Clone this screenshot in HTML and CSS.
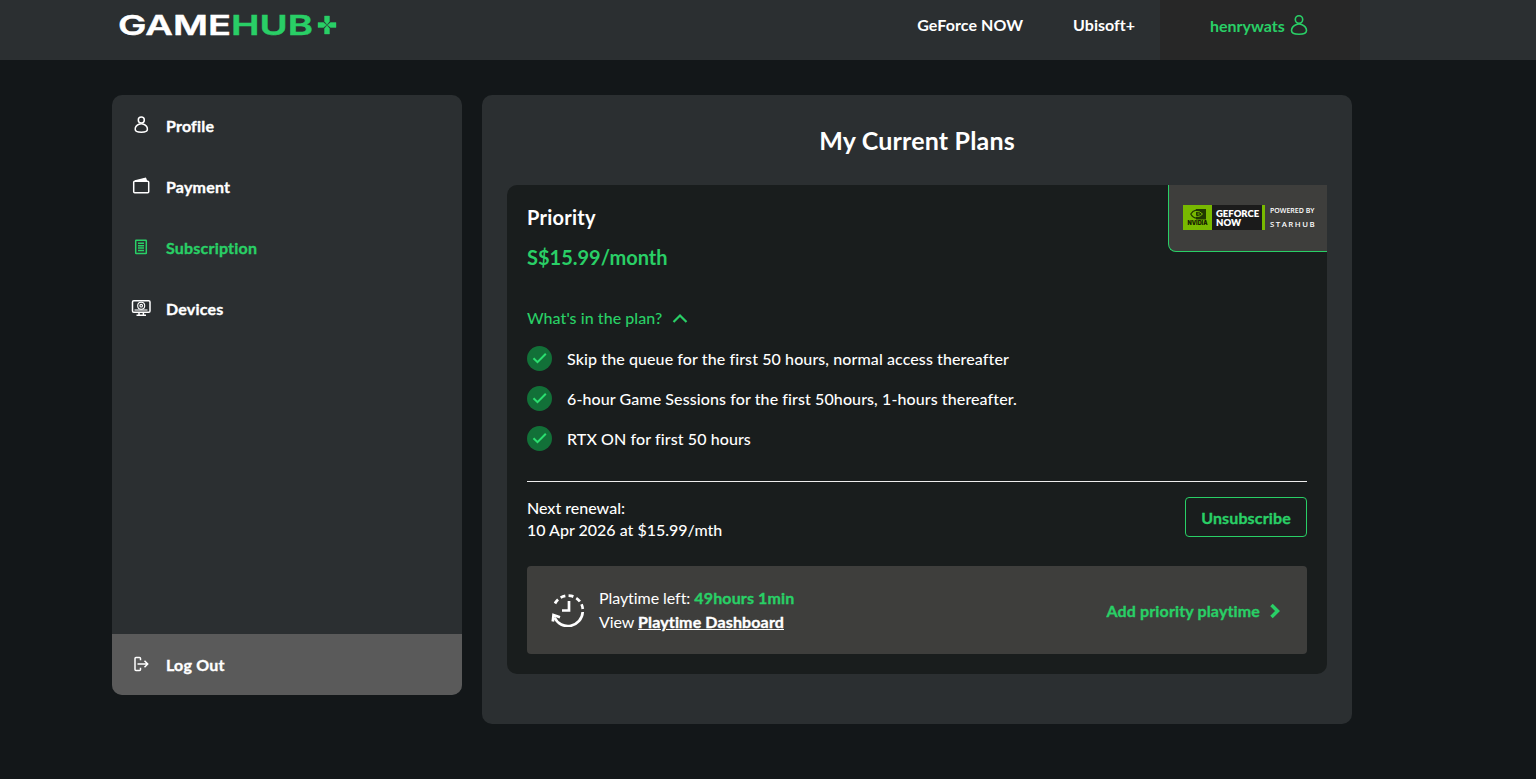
FILE: index.html
```html
<!DOCTYPE html>
<html lang="en">
<head>
<meta charset="utf-8">
<title>GameHub+ | My Current Plans</title>
<link rel="stylesheet" href="styles.css">
</head>
<body>
<header class="topbar">
  <svg class="logo" width="220" height="26" viewBox="0 0 220 26" role="img" aria-label="GameHub+">
    <text class="logo-text" x="-1" y="22" textLength="113" lengthAdjust="spacingAndGlyphs">GAME</text>
    <text class="logo-text logo-hub" x="112" y="22" textLength="82" lengthAdjust="spacingAndGlyphs">HUB</text>
    <path class="logo-plus" d="M205.500 3h5v5.500l-2.500 3-2.500-3zM205.500 21h5v-5.500l-2.500-3-2.500 3zM199 9.500h5.500l3 2.500-3 2.500H199zM217 9.500h-5.500l-3 2.500 3 2.500h5.500z"/>
  </svg>
  <nav class="topnav">
    <a class="nav-gfn">GeForce NOW</a>
    <a class="nav-ubi">Ubisoft+</a>
    <a class="user"><span>henrywats</span>
      <svg width="18" height="22" viewBox="0 0 18 22"><circle cx="9" cy="5.500" r="3.700"/><path d="M6.500 10.500C3 12 1.500 14.500 1.500 16.500c0 3 3.300 3.700 7.500 3.700s7.500-.7 7.500-3.700c0-2-1.500-4.500-5-6q-2.500-1.200-5 0z"/></svg>
    </a>
  </nav>
</header>
<div class="layout">
  <aside class="sidebar">
    <a class="item"><svg class="icon" width="20" height="20" viewBox="0 0 20 20"><circle cx="10.300" cy="5" r="3"/><path d="M8 9.300c-2.700 1-3.800 3-3.800 4.900 0 2.300 2.500 3 6.100 3s6.100-.7 6.100-3c0-1.900-1.100-3.900-3.800-4.900q-2.300-.9-4.600 0z"/></svg><span>Profile</span></a>
    <a class="item"><svg class="icon" width="20" height="20" viewBox="0 0 20 20"><rect x="2.700" y="5.300" width="15" height="11.400" rx="1"/><path class="solid" d="M4 5 14.500 2.300 15.500 5z"/></svg><span>Payment</span></a>
    <a class="item active"><svg class="icon" width="20" height="20" viewBox="0 0 20 20"><rect x="4.700" y="3.200" width="10.600" height="13.300" rx=".5"/><path d="M7 6.300h6M7 8.700h6M7 11.100h6M7 13.500h6"/></svg><span>Subscription</span></a>
    <a class="item"><svg class="icon" width="20" height="20" viewBox="0 0 20 20"><rect x="1.500" y="2.700" width="17.500" height="11.600" rx="1.300"/><g class="fine"><circle cx="10.200" cy="7.700" r="3.500"/><circle cx="10.200" cy="7.700" r="1.300"/><path d="M3.500 12h13"/></g><path d="M8 14.500v2.300M12.400 14.500v2.300M5.500 17.300h9.500"/></svg><span>Devices</span></a>
    <a class="item logout"><svg class="icon" width="20" height="20" viewBox="0 0 20 20"><path d="M9.500 6.200V4.500q0-1-1-1h-3.500q-1 0-1 1v11q0 1 1 1h3.500q1 0 1-1v-1.700M6.500 10H16.500M13.500 6.800l3.200 3.200-3.200 3.200"/></svg><span>Log Out</span></a>
  </aside>
  <main class="panel">
    <h1>My Current Plans</h1>
    <section class="plan">
      <div class="provider">
        <div class="nvidia"><svg width="16" height="11" viewBox="0 0 16 11"><path class="eye-block" d="M6 0h10v10.500H6z"/><path class="eye" d="M6 1.200Q2.500 2 .8 5q2 4 6 4.200"/><path class="iris" d="M6 2.500Q4 3.200 3.200 5 4.500 7.500 7.500 7.500q3 0 5-2.500Q10 2 6 2.500zM7.500 5h2"/></svg><b>NVIDIA</b></div>
        <div class="gfn">GEFORCE<br>NOW</div>
        <div class="powered"><span>POWERED BY</span><span class="starhub">STARHUB</span></div>
      </div>
      <h2>Priority</h2>
      <p class="price">S$15.99/month</p>
      <div class="toggle"><span>What's in the plan?</span><svg width="16" height="10" viewBox="0 0 16 10"><path d="M1.500 9 8 2.500 14.500 9"/></svg></div>
      <ul class="features">
        <li><svg width="25" height="25" viewBox="0 0 25 25"><circle cx="12.500" cy="12.500" r="12.500"/><path d="m6.500 12.200 4 4 8.300-8.500"/></svg><span>Skip the queue for the first 50 hours, normal access thereafter</span></li>
        <li><svg width="25" height="25" viewBox="0 0 25 25"><circle cx="12.500" cy="12.500" r="12.500"/><path d="m6.500 12.200 4 4 8.300-8.500"/></svg><span>6-hour Game Sessions for the first 50hours, 1-hours thereafter.</span></li>
        <li><svg width="25" height="25" viewBox="0 0 25 25"><circle cx="12.500" cy="12.500" r="12.500"/><path d="m6.500 12.200 4 4 8.300-8.500"/></svg><span>RTX ON for first 50 hours</span></li>
      </ul>
      <div class="renewal">
        <p>Next renewal:<br>10 Apr 2026 at $15.99/mth</p>
        <button class="unsubscribe">Unsubscribe</button>
      </div>
      <div class="playtime">
        <svg class="clock" width="34" height="34" viewBox="0 0 34 34"><path d="M3.500 24.500A14.800 14.800 0 0 0 31.700 19"/><path d="M4 10.500A14.800 14.800 0 0 1 31.800 16" stroke-dasharray="5 3.200"/><path d="M18 8v9.500h-7M1.800 28.500l.7-6.500 6.500 2.300"/></svg>
        <p>Playtime left: <b class="left">49hours 1min</b><br>View <a class="dash">Playtime Dashboard</a></p>
        <a class="add"><span>Add priority playtime</span><svg width="10" height="16" viewBox="0 0 10 16"><path d="m1.500 2 6 6-6 6"/></svg></a>
      </div>
    </section>
  </main>
</div>
</body>
</html>
```
FILE: styles.css
```css
* { box-sizing: border-box; }
body { margin: 0; min-height: 779px; background: #131719; color: #fff; font: 500 16px/24px Lato, sans-serif; font-variant-ligatures: none; overflow: hidden; }
h1, h2, p, ul { margin: 0; padding: 0; }
svg { flex: none; fill: none; }
.topbar { height: 60px; background: #2b2f31; display: flex; justify-content: space-between; align-items: flex-start; padding: 0 176px 0 119px; }
.logo { margin-top: 13px; overflow: visible; }
.logo-text { font: 600 27.500px Inter, sans-serif; fill: #fff; stroke: #fff; stroke-width: .4; }
.logo .logo-hub, .logo-plus { fill: #29cf66; stroke: #29cf66; stroke-width: .4; }
.topnav { display: flex; height: 60px; font-weight: 700; }
.nav-gfn { padding-top: 13px; margin-right: 50px; letter-spacing: .08px; }
.nav-ubi { padding-top: 13px; margin-right: 25px; }
.user { width: 200px; background: #272727; color: #29cf66; display: flex; padding: 14px 0 0 50px; gap: 5px; }
.user svg { stroke: #29cf66; stroke-width: 1.600; }
.layout { display: flex; align-items: flex-start; gap: 20px; padding: 35px 0 0 112px; }
.sidebar { width: 350px; height: 600px; background: #2b2f31; border-radius: 10px; display: flex; flex-direction: column; overflow: hidden; }
.item { display: flex; align-items: center; gap: 15px; height: 61px; padding: 0 0 0 19px; }
.item span, .unsubscribe, .left, .dash, .add span { font-weight: 700; letter-spacing: .14px; -webkit-text-stroke: .35px currentColor; }
.item span { letter-spacing: .2px; }
.icon { stroke: #fff; stroke-width: 1.500; margin-top: -2px; }
.fine { stroke-width: 1.100; }
.solid { fill: #fff; }
.active { color: #29cf66; }
.active .icon { stroke: #29cf66; }
.logout { margin-top: auto; background: #5a5a5a; }
.panel { width: 870px; height: 629px; background: #2b2f31; border-radius: 10px; padding: 29px 25px; }
h1 { font-size: 25px; line-height: 32px; text-align: center; font-weight: 700; margin-bottom: 29px; letter-spacing: .18px; }
.plan { position: relative; height: 489px; background: #191d1d; border-radius: 10px 0 10px 10px; padding: 20px; overflow: hidden; }
.provider { position: absolute; top: 0; right: 0; width: 159px; height: 67px; background: #3e3e3c; border: solid #29cf66; border-width: 0 0 1px 1px; border-radius: 0 0 0 8px; display: flex; align-items: center; padding-left: 14px; }
.nvidia { width: 29px; height: 25px; background: #78b900; display: flex; flex-direction: column; align-items: center; justify-content: center; color: #162000; font: 800 5.500px/7px Inter, sans-serif; margin-top: -1px; }
.eye-block { fill: #203800; }
.eye { stroke: #203800; stroke-width: 1.200; }
.iris { stroke: #78b900; stroke-width: 1; }
.gfn { width: 53px; height: 25px; padding: 4px 0 0 4px; background: #1b1b1b; border-right: 3px solid #78b900; font: 800 9.500px/9px Lato, sans-serif; margin-top: -1px; }
.powered { display: flex; flex-direction: column; margin-left: 5px; font: 600 7px/10px "Open Sans", sans-serif; gap: 3px; margin-top: -2px; }
.starhub { letter-spacing: 1.500px; font-size: 7.800px; }
h2 { font-size: 20px; line-height: 24px; font-weight: 700; letter-spacing: .25px; }
.price { margin-top: 16px; font-size: 20px; font-weight: 700; color: #29cf66; }
.toggle { margin-top: 37px; display: flex; align-items: center; gap: 10px; color: #29cf66; letter-spacing: .06px; }
.toggle svg, .add svg { stroke: #29cf66; stroke-width: 2.200; }
.features { list-style: none; margin-top: 9px; padding-bottom: 22px; border-bottom: 1px solid #eee; letter-spacing: .1px; }
.features li { display: flex; align-items: center; gap: 15px; height: 40px; }
.features svg { margin-top: -2px; }
.features circle { fill: #127038; }
.features svg path { stroke: #2bdf70; stroke-width: 2; }
.renewal { display: flex; justify-content: space-between; margin-top: 15px; line-height: 22px; }
.unsubscribe { width: 122px; height: 40px; background: transparent; border: 1px solid #29cf66; border-radius: 4px; color: #29cf66; font-family: Lato, sans-serif; font-size: 16px; padding: 0; }
.playtime { height: 88px; margin-top: 25px; background: #3e3e3c; border-radius: 4px; display: flex; align-items: center; padding: 0 27px 0 24px; font-weight: 400; }
.playtime p { letter-spacing: -.06px; }
.clock { stroke: #fff; stroke-width: 2.700; margin-right: 14px; }
.left { color: #29cf66; }
.dash { text-decoration: underline; }
.add { margin-left: auto; display: flex; align-items: center; gap: 10px; color: #29cf66; padding-top: 2px; }
.add svg { stroke-width: 3.500; }
```
